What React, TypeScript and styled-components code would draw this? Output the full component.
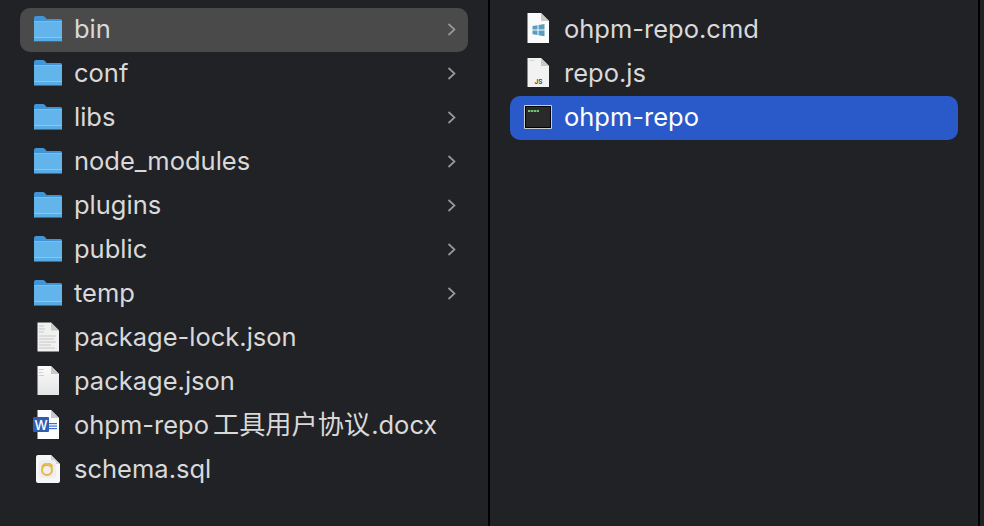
import React from 'react'
import styled, { createGlobalStyle } from 'styled-components'

const GlobalStyle = createGlobalStyle`
  html, body {
    margin: 0;
    padding: 0;
    background: #212226;
  }
`

const Window = styled.div`
  display: grid;
  grid-template-columns: 490px 490px 4px;
  width: 984px;
  height: 526px;
  overflow: hidden;
  background: #212226;
  font-family: Inter, "Noto Sans CJK SC", sans-serif;
`

const Column = styled.div`
  display: flex;
  flex-direction: column;
  padding: 8px 20px;
  box-sizing: border-box;
  border-right: 2px solid #000;
`

const Row = styled.div<{ $state?: 'active' | 'selected' }>`
  display: flex;
  align-items: center;
  height: 44px;
  flex: none;
  padding: 0 12px;
  border-radius: 10px;
  color: ${p => (p.$state === 'selected' ? '#fff' : '#d9d9da')};
  background: ${p =>
    p.$state === 'active' ? '#4a4a4b' : p.$state === 'selected' ? '#2a5ac9' : 'transparent'};
`

const IconSlot = styled.svg`
  width: 32px;
  height: 36px;
  flex: none;
  margin-right: 10px;
`

const Name = styled.span`
  font-size: 25.5px;
  line-height: 42px;
  padding-bottom: 2px;
  white-space: nowrap;
`

const Cjk = styled.span`
  font-size: 26.2px;
  margin: 0 1px 0 4px;
`

const Chevron = styled.svg`
  width: 10px;
  height: 16px;
  margin-left: auto;
  margin-right: -1px;
  flex: none;
`

const PAGE = 'M0.5 0 H14 L22 8 V29 H0.5 Z'

const Folder = () => (
  <IconSlot viewBox="0 0 32 36">
    <path d="M2 6 Q2 4 4 4 H11 Q12.5 4 13.5 5.5 L14.5 7 H28.5 Q30 7 30 8.5 V12 H2 Z" fill="#3f95d6" />
    <path d="M2 9 H30 V28.5 Q30 30 28.5 30 H3.5 Q2 30 2 28.5 Z" fill="#62b4ea" />
    <rect x="2" y="9" width="28" height="1" fill="#74c0f2" />
    <rect x="2" y="25" width="28" height="1" fill="#86c8f3" />
    <rect x="2" y="26" width="28" height="3" fill="#58ace6" />
    <rect x="2.5" y="29" width="27" height="1" fill="#2c6f9f" />
  </IconSlot>
)

const Fold = () => <path d="M14 0 V8 H22 Z" fill="#c9c9c9" />

const LockDoc = () => (
  <IconSlot viewBox="0 0 32 36">
    <g transform="translate(5 2.5)">
      <path d={PAGE} fill="#f1f1f1" />
      <Fold />
      <g fill="#c8c8c8">
        <rect x="2" y="3" width="5" height="1" />
        <rect x="2" y="6" width="6" height="1" />
        <rect x="2" y="9" width="5" height="1" />
        <rect x="2" y="13" width="17" height="1" />
        <rect x="2" y="16" width="15" height="1" />
        <rect x="2" y="19" width="17" height="1" />
        <rect x="2" y="22" width="12" height="1" />
        <rect x="2" y="25" width="16" height="1" />
      </g>
    </g>
  </IconSlot>
)

const JsonDoc = () => (
  <IconSlot viewBox="0 0 32 36">
    <g transform="translate(5 2)">
      <defs>
        <linearGradient id="jsonPage" x1="0" y1="0" x2="0" y2="1">
          <stop offset="0" stopColor="#fbfbfb" />
          <stop offset="1" stopColor="#e4e4e4" />
        </linearGradient>
      </defs>
      <path d={PAGE} fill="url(#jsonPage)" />
      <Fold />
      <g fill="#d0d0d0">
        <rect x="2" y="3" width="5" height="1" />
        <rect x="2" y="6" width="4" height="1" />
        <rect x="2" y="9" width="5" height="1" />
      </g>
    </g>
  </IconSlot>
)

const WordDoc = () => (
  <IconSlot viewBox="0 0 32 36">
    <g transform="translate(5 2)">
      <path d={PAGE} fill="#fff" />
      <Fold />
      <g fill="#3d6fd0">
        <rect x="12" y="13" width="8" height="1.2" />
        <rect x="12" y="15.5" width="8" height="1.2" />
        <rect x="12" y="18" width="8" height="1.2" />
      </g>
    </g>
    <rect x="1" y="9" width="16" height="15" rx="1" fill="#2f5cb5" />
    <text x="9" y="21.5" textAnchor="middle" fontSize="13" fontWeight="500" fill="#fff" fontFamily="Inter, sans-serif">W</text>
  </IconSlot>
)

const SqlDoc = () => (
  <IconSlot viewBox="0 0 32 36">
    <path d="M6 3 H19 L28 12 V29 Q28 31 26 31 H6 Q4 31 4 29 V5 Q4 3 6 3 Z" fill="#f6f6f6" />
    <path d="M19 3 V12 H28 Z" fill="#d2d2d2" />
    <rect x="7" y="8" width="17" height="18" rx="3" fill="#eeeeee" />
    <circle cx="15" cy="18" r="5" fill="none" stroke="#e3b84a" strokeWidth="2" />
    <path d="M10 15 Q11.5 11 15.5 12 Q19.5 11 20.5 15" fill="none" stroke="#e3b84a" strokeWidth="1.6" />
  </IconSlot>
)

const CmdDoc = () => (
  <IconSlot viewBox="0 0 32 36">
    <g transform="translate(5 1)">
      <path d="M0.5 0 H14 L22 8 V30 H0.5 Z" fill="#fbfbfb" />
      <Fold />
      <g fill="#5a9dc0">
        <path d="M5.5 13 L10.5 12.2 V16.6 H5.5 Z" />
        <path d="M11.5 12 L17.5 11 V16.6 H11.5 Z" />
        <path d="M5.5 17.6 H10.5 V22 L5.5 21.2 Z" />
        <path d="M11.5 17.6 H17.5 V23.2 L11.5 22.2 Z" />
      </g>
    </g>
  </IconSlot>
)

const JsDoc = () => (
  <IconSlot viewBox="0 0 32 36">
    <g transform="translate(5 2)">
      <path d={PAGE} fill="#f2f2f2" />
      <Fold />
      <rect x="2.5" y="2" width="5" height="1" fill="#d4d4d4" />
      <text x="11.5" y="26" textAnchor="middle" fontSize="6.5" fontWeight="600" fill="#444" fontFamily="Inter, sans-serif">JS</text>
    </g>
  </IconSlot>
)

const Terminal = () => (
  <IconSlot viewBox="0 0 32 36">
    <rect x="2" y="5" width="28" height="24" rx="1" fill="#c9ced1" />
    <rect x="3" y="6" width="26" height="22" fill="#000" />
    <rect x="4" y="7" width="24" height="20" fill="#2a2a2a" />
    <g fill="#6fc46f">
      <rect x="6" y="10" width="2.4" height="2" />
      <rect x="9" y="10" width="2.4" height="2" />
      <rect x="12" y="10" width="2.4" height="2" />
      <rect x="15" y="10" width="2" height="2" />
    </g>
  </IconSlot>
)

const Arrow = () => (
  <Chevron viewBox="0 0 10 16">
    <path d="M1.5 2 L7.5 7.5 L1.5 13" fill="none" stroke="#98989a" strokeWidth="1.7" />
  </Chevron>
)

const parents = [
  { name: 'bin', icon: <Folder />, dir: true, state: 'active' as const },
  { name: 'conf', icon: <Folder />, dir: true },
  { name: 'libs', icon: <Folder />, dir: true },
  { name: 'node_modules', icon: <Folder />, dir: true },
  { name: 'plugins', icon: <Folder />, dir: true },
  { name: 'public', icon: <Folder />, dir: true },
  { name: 'temp', icon: <Folder />, dir: true },
  { name: 'package-lock.json', icon: <LockDoc /> },
  { name: 'package.json', icon: <JsonDoc /> },
  { name: <>ohpm-repo<Cjk>工具用户协议</Cjk>.docx</>, icon: <WordDoc /> },
  { name: 'schema.sql', icon: <SqlDoc /> },
]

const children = [
  { name: 'ohpm-repo.cmd', icon: <CmdDoc /> },
  { name: 'repo.js', icon: <JsDoc /> },
  { name: 'ohpm-repo', icon: <Terminal />, state: 'selected' as const },
]

function App() {
  return (
    <Window>
      <GlobalStyle />
      <Column>
        {parents.map((item, i) => (
          <Row key={i} $state={item.state}>
            {item.icon}
            <Name>{item.name}</Name>
            {item.dir && <Arrow />}
          </Row>
        ))}
      </Column>
      <Column>
        {children.map((item, i) => (
          <Row key={i} $state={item.state}>
            {item.icon}
            <Name>{item.name}</Name>
          </Row>
        ))}
      </Column>
    </Window>
  )
}

export default App
